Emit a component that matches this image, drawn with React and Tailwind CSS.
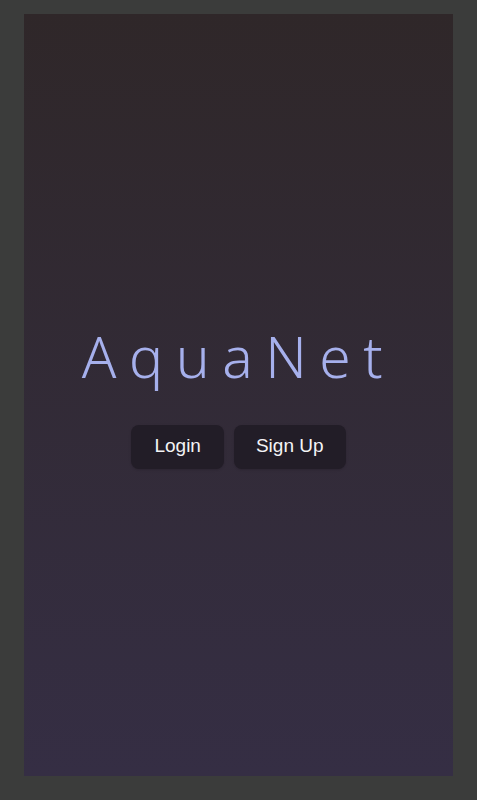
export default function App() {
  return (
    <div className="min-h-[800px] w-full bg-[#3b3c3b] pt-[14px] pb-[24px] px-[24px]">
      <div className="h-[762px] w-full bg-gradient-to-b from-[#2f2729] to-[#352e44] flex flex-col items-center justify-center">
        <h1
          className="mt-[6px] text-[57px] font-light leading-none tracking-[0.22em] text-[#a6b0ec]"
          style={{ fontFamily: '"Noto Sans", sans-serif' }}
        >
          AquaNet
        </h1>
        <div className="mt-[40px] flex gap-[10px]" style={{ fontFamily: '"Liberation Sans", Arial, sans-serif' }}>
          <button className="h-[44px] px-[23px] rounded-[8px] bg-[#221d27] text-[#f4f4f6] text-[19px] shadow-sm">
            Login
          </button>
          <button className="h-[44px] px-[22px] rounded-[8px] bg-[#221d27] text-[#f4f4f6] text-[19px] shadow-sm">
            Sign Up
          </button>
        </div>
      </div>
    </div>
  );
}
